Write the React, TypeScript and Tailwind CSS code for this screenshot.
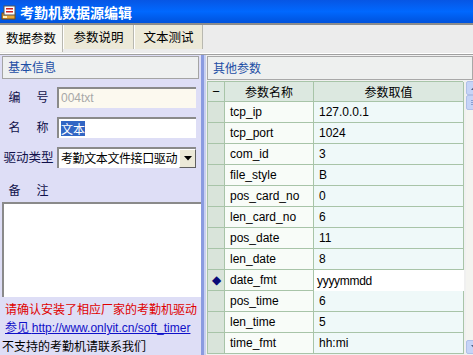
import React from 'react';

const PARAMS: [string, string][] = [
    ['tcp_ip', '127.0.0.1'],
    ['tcp_port', '1024'],
    ['com_id', '3'],
    ['file_style', 'B'],
    ['pos_card_no', '0'],
    ['len_card_no', '6'],
    ['pos_date', '11'],
    ['len_date', '8'],
    ['date_fmt', 'yyyymmdd'],
    ['pos_time', '6'],
    ['len_time', '5'],
    ['time_fmt', 'hh:mi'],
];

const AppIcon = () => (
    <svg width="16" height="16" viewBox="0 0 16 16">
        <rect x="1" y="9" width="13" height="6" fill="#e8a83a" stroke="#7a4a10" strokeWidth="1" />
        <rect x="3" y="2" width="11" height="9" fill="#ffffff" stroke="#555" strokeWidth="1" />
        <rect x="5" y="4" width="7" height="1.5" fill="#d02020" />
        <rect x="5" y="7" width="7" height="1.5" fill="#d02020" />
        <rect x="2" y="12" width="4" height="2" fill="#fff3c0" />
    </svg>
);

const Field: React.FC<{ label: React.ReactNode; children: React.ReactNode }> = ({ label, children }) => (
    <div className="flex items-center h-[21px]">
        <div className="w-[57px] shrink-0 flex justify-center text-[#10104a]">{label}</div>
        {children}
    </div>
);

const App: React.FC = () => {
    return (
        <div className="w-[473px] h-[355px] overflow-hidden flex flex-col bg-[#ececec] text-[12px] font-['Noto_Sans_CJK_SC',sans-serif]">
            {/* Title bar */}
            <div className="h-[23px] shrink-0 flex items-center gap-[3px] pl-[1px] bg-gradient-to-b from-[#0756e4] via-[#0068ff] to-[#0052dc]">
                <AppIcon />
                <span className="text-white font-bold text-[14px] leading-none">考勤机数据源编辑</span>
            </div>
            <div className="h-[2px] shrink-0 bg-[#8c8c8c]" />

            {/* Tabs */}
            <div className="h-[30px] shrink-0 flex items-start border-b border-[#a0a0a0] shadow-[inset_0_-1px_0_#ffffff]">
                <div className="w-[63px] h-[27px] flex items-center justify-center bg-[#f6f6f2] border-r border-[#b8b8b0] text-black text-[12.5px]">数据参数</div>
                <div className="w-[71px] h-[24px] flex items-center justify-center bg-[#ece9d8] border-r border-[#b8b8b0] border-l border-l-white text-black text-[12.5px]">参数说明</div>
                <div className="w-[69px] h-[24px] flex items-center justify-center bg-[#ece9d8] border-r border-[#b8b8b0] border-l border-l-white text-black text-[12.5px]">文本测试</div>
            </div>

            <div className="flex-1 flex min-h-0">
                {/* Left panel */}
                <div className="w-[201px] shrink-0 bg-[#dedef6] flex flex-col">
                    <div className="mx-[2px] mt-[1px] h-[23px] border border-[#a4a4a4] bg-[#eef0f0] flex items-center pl-[5px] text-[#1d4ea5]">
                        基本信息
                    </div>
                    <div className="flex flex-col gap-[9px] mt-[8px]">
                        <Field label={<span className="w-[40px] flex justify-between"><span>编</span><span>号</span></span>}>
                            <div className="w-[139px] h-[21px] bg-[#fcf9ef] border-t-2 border-l-2 border-[#8a8a8a] flex items-center pl-[2px] text-[#a8a8a8] font-['Liberation_Sans',sans-serif]">004txt</div>
                        </Field>
                        <Field label={<span className="w-[40px] flex justify-between"><span>名</span><span>称</span></span>}>
                            <div className="w-[139px] h-[21px] bg-white border-t-2 border-l-2 border-[#8a8a8a] flex items-center pl-[2px]">
                                <span className="bg-[#3266c4] text-white leading-[15px]">文本</span>
                            </div>
                        </Field>
                        <Field label={<span className="text-[12.5px]">驱动类型</span>}>
                            <div className="w-[139px] h-[21px] bg-white border-t-2 border-l-2 border-[#8a8a8a] flex items-center overflow-hidden">
                                <span className="flex-1 pl-[2px] whitespace-nowrap tracking-[-0.4px]">考勤文本文件接口驱动</span>
                                <div className="w-[17px] h-full shrink-0 bg-[#ece9d8] border border-t-white border-l-white border-r-[#606060] border-b-[#606060] flex items-center justify-center">
                                    <svg width="8" height="5" viewBox="0 0 8 5"><path d="M0 0h8L4 4.5z" fill="#000" /></svg>
                                </div>
                            </div>
                        </Field>
                    </div>
                    <div className="mt-[12px] h-[21px] flex items-center">
                        <div className="w-[57px] flex justify-center text-[#10104a]">
                            <span className="w-[40px] flex justify-between"><span>备</span><span>注</span></span>
                        </div>
                    </div>
                    <div className="ml-[2px] mt-[2px] h-[97px] bg-white border-t-2 border-l-2 border-[#8a8a8a]" />
                    <div className="mt-[3px] leading-[18px] whitespace-nowrap">
                        <div className="pl-[5px] text-[#e00000]">请确认安装了相应厂家的考勤机驱动</div>
                        <div className="pl-[5px] text-[#1010c8] underline">参见 <span className="font-['Liberation_Sans',sans-serif] text-[12px]">http://www.onlyit.cn/soft_timer</span></div>
                        <div className="pl-[2px] text-black">不支持的考勤机请联系我们</div>
                    </div>
                </div>

                {/* Splitter */}
                <div className="w-[5px] shrink-0 bg-[#dedef6] flex">
                    <div className="w-[3px] bg-[#8a9be0]" />
                    <div className="w-[2px] bg-[#c8d0f0]" />
                </div>

                {/* Right panel */}
                <div className="flex-1 flex flex-col bg-[#f0f0f0] min-w-0">
                    <div className="ml-[1px] mt-[1px] h-[24px] border border-[#a8a8a8] bg-[#eef0ef] flex items-center pl-[5px] text-[#1d4ea5]">
                        其他参数
                    </div>
                    <div className="flex ml-[1px] mt-[1px] gap-[3px]">
                        <div className="w-[256px] shrink-0 border-l border-t border-[#a8c4a8] font-['Liberation_Sans',sans-serif] text-[12px] text-black">
                            <div className="grid grid-cols-[17px_89px_150px] h-[20px] bg-[#dce8e0]">
                                <div className="border-r border-b border-[#a8c4a8] flex items-center justify-center text-[13px] leading-none">−</div>
                                <div className="border-r border-b border-[#a8c4a8] flex items-center justify-center font-['Noto_Sans_CJK_SC',sans-serif]">参数名称</div>
                                <div className="border-r border-b border-[#a8c4a8] flex items-center justify-center font-['Noto_Sans_CJK_SC',sans-serif]">参数取值</div>
                            </div>
                            {PARAMS.map(([name, value]) => {
                                const active = name === 'date_fmt';
                                return (
                                    <div key={name} className="grid grid-cols-[17px_89px_150px] h-[21px]">
                                        <div className="bg-[#d9e4da] border-r border-b border-[#a8c4a8] flex items-center justify-center">
                                            {active && <span className="text-[#0a0a78] text-[12px] leading-none">◆</span>}
                                        </div>
                                        <div className="bg-[#f8fcf8] border-r border-b border-[#a8c4a8] flex items-center pl-[5px]">{name}</div>
                                        {active ? (
                                            <div className="bg-white flex items-center pl-[3px] tracking-[-0.3px]">{value}</div>
                                        ) : (
                                            <div className="bg-[#eff9f9] border-r border-b border-[#a8c4a8] flex items-center pl-[5px]">{value}</div>
                                        )}
                                    </div>
                                );
                            })}
                        </div>
                        {/* Scrollbar */}
                        <div className="w-[16px] shrink-0 h-[273px] bg-[#f4f4f0] flex flex-col">
                            <div className="h-[14px] bg-[#c6d4f7] border border-[#b0c0e8] rounded-[2px] flex items-center justify-center">
                                <svg width="7" height="4" viewBox="0 0 7 4"><path d="M0 4L3.5 0L7 4z" fill="#4d6185" /></svg>
                            </div>
                            <div className="h-[15px] bg-[#c6d4f7] border border-[#b0c0e8] rounded-[2px] flex flex-col items-center justify-center gap-[1px]">
                                <div className="w-[6px] h-px bg-[#8a9fd0]" />
                                <div className="w-[6px] h-px bg-[#8a9fd0]" />
                                <div className="w-[6px] h-px bg-[#8a9fd0]" />
                            </div>
                            <div className="flex-1" />
                            <div className="h-[14px] bg-[#c6d4f7] border border-[#b0c0e8] rounded-[2px] flex items-center justify-center">
                                <svg width="7" height="4" viewBox="0 0 7 4"><path d="M0 0L3.5 4L7 0z" fill="#4d6185" /></svg>
                            </div>
                        </div>
                    </div>
                </div>
            </div>
        </div>
    );
};

export default App;
